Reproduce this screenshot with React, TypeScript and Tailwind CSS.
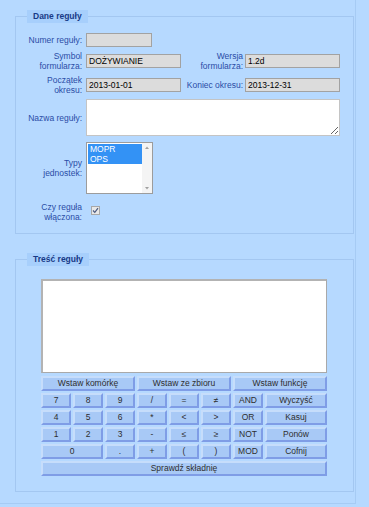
const font = { fontFamily: '"Liberation Sans", Arial, sans-serif' };

const btn =
  "flex items-center justify-center h-[15px] bg-[#a8c9f6] border-2 border-t-[#c6ddfb] border-l-[#c6ddfb] border-b-[#7f9de6] border-r-[#7f9de6] text-[8.5px] leading-none text-[#2e2e2e]";

const lbl = "text-right text-[8.5px] leading-[10px] text-[#2a4ca6]";
const inp =
  "h-[14px] border border-[#a2a2a2] bg-[#dcdcdc] px-[2px] text-[8.5px] leading-none text-black outline-none";

const keys: { t: string; span?: boolean }[] = [
  { t: "7" }, { t: "8" }, { t: "9" }, { t: "/" }, { t: "=" }, { t: "≠" }, { t: "AND" }, { t: "Wyczyść" },
  { t: "4" }, { t: "5" }, { t: "6" }, { t: "*" }, { t: "<" }, { t: ">" }, { t: "OR" }, { t: "Kasuj" },
  { t: "1" }, { t: "2" }, { t: "3" }, { t: "-" }, { t: "≤" }, { t: "≥" }, { t: "NOT" }, { t: "Ponów" },
  { t: "0", span: true }, { t: "." }, { t: "+" }, { t: "(" }, { t: ")" }, { t: "MOD" }, { t: "Cofnij" },
];

const Legend = ({ children, className }: { children: string; className: string }) => (
  <legend
    className={`${className} h-[13px] bg-[#a7cffc] px-[6px] text-[8.5px] font-bold leading-[13px] text-[#173a87]`}
  >
    {children}
  </legend>
);

export default function App() {
  return (
    <div className="w-[369px] h-[507px] bg-[#b6d9ff]" style={font}>
      <div className="w-[356px] h-[504px] border-r border-b border-[#a6cbf4] pl-[15px] pt-[10px]">
        <fieldset className="w-[339px] h-[224px] border border-[#a3c7f1] px-[4px] pt-[10px]">
          <Legend className="ml-[7px]">Dane reguły</Legend>

          <div className="flex items-center h-[14px]">
            <div className={`${lbl} w-[62px] mr-[4px]`}>Numer reguły:</div>
            <input readOnly value="" className={`${inp} w-[66px]`} />
          </div>

          <div className="flex items-center h-[20px] mt-[4px]">
            <div className={`${lbl} w-[62px] mr-[4px]`}>
              Symbol
              <br />
              formularza:
            </div>
            <input readOnly value="DOŻYWIANIE" className={`${inp} w-[95px]`} />
            <div className={`${lbl} w-[62px] mr-[2px]`}>
              Wersja
              <br />
              formularza:
            </div>
            <input readOnly value="1.2d" className={`${inp} w-[95px]`} />
          </div>

          <div className="flex items-center h-[20px] mt-[4px]">
            <div className={`${lbl} w-[62px] mr-[4px]`}>
              Początek
              <br />
              okresu:
            </div>
            <input readOnly value="2013-01-01" className={`${inp} w-[95px]`} />
            <div className={`${lbl} w-[62px] mr-[2px]`}>Koniec okresu:</div>
            <input readOnly value="2013-12-31" className={`${inp} w-[95px]`} />
          </div>

          <div className="flex items-center mt-[4px]">
            <div className={`${lbl} w-[62px] mr-[4px]`}>Nazwa reguły:</div>
            <textarea className="block w-[254px] h-[37px] border border-[#c4c4c4] bg-white outline-none" />
          </div>

          <div className="flex items-center mt-[6px]">
            <div className={`${lbl} w-[62px] mr-[4px]`}>
              Typy
              <br />
              jednostek:
            </div>
            <div className="flex w-[67px] h-[52px] border border-[#9c9c9c] bg-white">
              <div className="flex-1 pt-[1px] pl-[1px]">
                <div className="bg-[#3392f5] px-[2px] text-[8.5px] leading-[10px] text-white">MOPR</div>
                <div className="bg-[#3392f5] px-[2px] text-[8.5px] leading-[10px] text-white">OPS</div>
              </div>
              <div className="flex w-[10px] flex-col justify-between bg-[#f4f4f4]">
                <svg width="10" height="9" viewBox="0 0 10 9">
                  <path d="M3 6 L5 3.5 L7 6 Z" fill="#a0a0a0" />
                </svg>
                <svg width="10" height="9" viewBox="0 0 10 9">
                  <path d="M3 3 L5 5.5 L7 3 Z" fill="#a0a0a0" />
                </svg>
              </div>
            </div>
          </div>

          <div className="flex items-center h-[20px] mt-[8px]">
            <div className={`${lbl} w-[62px] mr-[4px]`}>
              Czy reguła
              <br />
              włączona:
            </div>
            <div className="ml-[5px] mb-[3px] flex h-[9px] w-[9px] items-center justify-center border border-[#a8a8a8] bg-[#e8e8e8]">
              <svg width="7" height="7" viewBox="0 0 7 7">
                <path d="M1 3.5 L2.8 5.3 L6 1.2" stroke="#4a5a80" strokeWidth="1.2" fill="none" />
              </svg>
            </div>
          </div>
        </fieldset>

        <fieldset className="mt-[19px] w-[339px] h-[239px] border border-[#a3c7f1] pl-[25px] pt-[13px]">
          <Legend className="-ml-[14px]">Treść reguły</Legend>

          <textarea className="block w-[286px] h-[94px] resize-none border border-[#a9a9a9] border-t-2 border-l-2 border-t-[#b3b3b3] border-l-[#b3b3b3] bg-white outline-none" />

          <div className="mt-[3px] grid w-[286px] grid-cols-3 gap-[2px]">
            <div className={btn}>Wstaw komórkę</div>
            <div className={btn}>Wstaw ze zbioru</div>
            <div className={btn}>Wstaw funkcję</div>
          </div>

          <div className="mt-[2px] grid w-[286px] grid-cols-[repeat(7,30px)_1fr] gap-[2px]">
            {keys.map((k) => (
              <div key={k.t} className={`${btn} ${k.span ? "col-span-2" : ""}`}>
                {k.t}
              </div>
            ))}
            <div className={`${btn} col-span-8`}>Sprawdź składnię</div>
          </div>
        </fieldset>
      </div>
    </div>
  );
}
